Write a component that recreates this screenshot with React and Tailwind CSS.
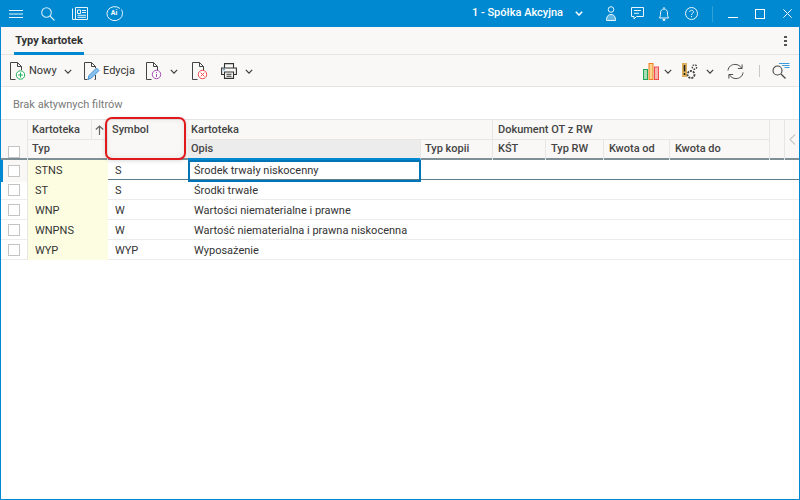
import React from "react";

const cols = "grid-cols-[27px_80px_80px_233px_72px_53px_58px_66px_100px_1fr]";

const Chevron = ({ className = "" }) => (
  <svg width="8" height="5" viewBox="0 0 10 6" className={className} fill="none" stroke="#3c3c3c" strokeWidth="1.500">
    <path d="M1 1 5 5 9 1" />
  </svg>
);

const Doc = ({ children }) => (
  <svg width="16" height="18" viewBox="0 0 16 18" fill="none" className="block">
    <path d="M.5 17.500V.5H7.500L11.500 4.500V8M7.500 .5V4.500H11.500M.5 17.500H5.500" stroke="#444" strokeWidth="1" />
    {children}
  </svg>
);

const Check = () => <div className="w-[12px] h-[12px] border border-[#c4c4c4] bg-white" />;

const rows = [
  ["STNS", "S", "Środek trwały niskocenny"],
  ["ST", "S", "Środki trwałe"],
  ["WNP", "W", "Wartości niematerialne i prawne"],
  ["WNPNS", "W", "Wartość niematerialna i prawna niskocenna"],
  ["WYP", "WYP", "Wyposażenie"],
];

const Hcell = ({ children, className = "" }) => (
  <div className={"flex items-center pt-[1px] text-[11px] font-medium text-[#444] border-r border-[#e6e6e6] " + className}>{children}</div>
);

export default function App() {
  return (
    <div className="w-[800px] h-[500px] overflow-hidden bg-white flex flex-col border-x border-b border-[#0089d0] text-[#333] font-['Roboto',sans-serif]">
      {/* title bar */}
      <div className="h-[27px] -mx-px shrink-0 bg-[#0089d0] flex items-center text-white">
        <svg width="14" height="8" viewBox="0 0 14 8" className="ml-[9px]" stroke="#e8f5fc" strokeWidth="1"><path d="M0 .5H14M0 4H14M0 7.500H14" /></svg>
        <svg width="14" height="14" viewBox="0 0 14 14" className="ml-[18px]" fill="none" stroke="#d5edf9" strokeWidth="1.100"><circle cx="5.500" cy="5.500" r="4.800" /><path d="M9 9l4.500 4.500" /></svg>
        <svg width="16" height="13" viewBox="0 0 16 13" className="ml-[17px]" fill="none" stroke="#e8f5fc" strokeWidth="1"><path d="M.5 1.500V12.500H15.500V.5H3.500V12.500" /><path d="M5.500 3H8.500V6.500H5.500ZM10 3.500H14M10 5.500H14M5.500 8.300H14M5.500 10.300H14" /></svg>
        <div className="ml-[17px] grid place-items-center">
          <svg width="18" height="16" viewBox="0 0 18 16" className="col-start-1 row-start-1" fill="none" stroke="#e8f5fc" strokeWidth="1"><path d="M15 2.500A7.800 7 0 1 0 17.500 7.500 7 7 0 0 0 16.500 3.500" /></svg>
          <span className="col-start-1 row-start-1 text-[7px] font-bold leading-none">Ai</span>
        </div>
        <div className="ml-auto flex items-center">
          <span className="text-[11px] font-medium">1 - Spółka Akcyjna</span>
          <svg width="8" height="5" viewBox="0 0 8 5" className="ml-[12px]" fill="none" stroke="#fff" strokeWidth="1.500"><path d="M.8.800 4 4 7.200.800" /></svg>
          <svg width="10" height="15" viewBox="0 0 10 15" className="ml-[23px]" fill="none" stroke="#e8f5fc" strokeWidth="1"><circle cx="5" cy="3.500" r="2.800" /><path d="M.5 14.500C.5 10.500 2 8.500 5 8.500S9.500 10.500 9.500 14.500Z" fill="#5fb6e4" /></svg>
          <svg width="13" height="13" viewBox="0 0 13 13" className="ml-[15px]" fill="none" stroke="#e8f5fc" strokeWidth="1"><path d="M.5.500H12.500V9.500H5.500L3 12V9.500H.5Z" /><path d="M3 3.500H10M3 6.300H8" /></svg>
          <svg width="10" height="14" viewBox="0 0 10 14" className="ml-[15px]" fill="none" stroke="#e8f5fc" strokeWidth="1"><path d="M.5 11H9.500C8.700 9.500 8.500 8.500 8.500 6 8.500 3.500 7 2 5 2S1.500 3.500 1.500 6C1.500 8.500 1.300 9.500.5 11Z" /><path d="M5 0V2" /><circle cx="5" cy="12.800" r=".9" fill="#fff" /></svg>
          <svg width="13" height="13" viewBox="0 0 13 13" className="ml-[16px]" fill="none" stroke="#e8f5fc" strokeWidth="1"><circle cx="6.500" cy="6.500" r="6" /><path d="M4.700 5C4.700 2.700 8.500 2.700 8.500 4.900 8.500 6.300 6.500 6.300 6.500 8" /><path d="M6.500 9V10.200" /></svg>
          <div className="ml-[14px] w-px h-[16px] bg-[#2ea0da]" />
          <div className="ml-[15px] w-[10px] h-px bg-white mt-[8px]" />
          <div className="ml-[17px] w-[10px] h-[10px] border border-white" />
          <svg width="9" height="9" viewBox="0 0 9 9" className="ml-[18px] mr-[8px]" stroke="#e8f5fc" strokeWidth="1"><path d="M.3.300l8.400 8.400M8.700.300l-8.400 8.400" /></svg>
        </div>
      </div>

      {/* tabs */}
      <div className="h-[28px] shrink-0 bg-[#f9f8f6] border-b border-[#e4e4e4] flex items-stretch">
        <div className="ml-[13px] w-[70px] pt-[4px] border-b-[3px] border-[#0089d0] -mb-px flex items-center justify-center text-[11px] font-bold text-[#333] whitespace-nowrap">Typy kartotek</div>
        <div className="ml-auto mr-[12px] flex flex-col justify-center gap-[2px]">
          <div className="w-[3px] h-[2px] bg-[#555]" />
          <div className="w-[3px] h-[2px] bg-[#555]" />
          <div className="w-[3px] h-[2px] bg-[#555]" />
        </div>
      </div>

      {/* toolbar */}
      <div className="h-[32px] pt-[1px] shrink-0 bg-[#f9f8f6] border-b border-[#e4e4e4] flex items-center text-[11px] text-[#333]">
        <div className="ml-[9px] w-[16px]">
          <Doc>
            <circle cx="10.500" cy="13" r="4.200" stroke="#22b35e" strokeWidth="1" fill="#fff" />
            <path d="M8 13H13M10.500 10.500V15.500" stroke="#22b35e" strokeWidth="1" />
          </Doc>
        </div>
        <span className="ml-[3px] w-[27px]">Nowy</span>
        <Chevron className="ml-[8px]" />
        <div className="ml-[12px] w-[16px]">
          <svg width="16" height="18" viewBox="0 0 16 18" fill="none" className="block">
            <path d="M.5 17.500V.5H7.500L11.500 4.500V6M7.500 .5V4.500H11.500M.5 17.500H3.500M10.500 17.500H11.500V13" stroke="#444" />
            <path d="M4 17.500L5 13.500 12.500 6 15 8.500 7.500 16 4 17.500Z" fill="#8cc0ea" stroke="#3f93d8" />
          </svg>
        </div>
        <span className="ml-[3px] w-[32px]">Edycja</span>
        <div className="ml-[11px] w-[16px]">
          <Doc>
            <circle cx="10.500" cy="12.500" r="4.200" stroke="#a84fb5" fill="#fff" />
            <path d="M10.500 10V11M10.500 12V15" stroke="#a84fb5" />
          </Doc>
        </div>
        <Chevron className="ml-[8px]" />
        <div className="ml-[14px] w-[16px]">
          <Doc>
            <circle cx="10.500" cy="12.500" r="4.200" stroke="#ee4c4c" fill="#fff" />
            <path d="M8.700 10.700L12.300 14.300M12.300 10.700L8.700 14.300" stroke="#ee4c4c" />
          </Doc>
        </div>
        <div className="ml-[13px] w-[16px]">
          <svg width="16" height="16" viewBox="0 0 16 16" fill="none" stroke="#333" strokeWidth="1.100" className="block">
            <path d="M3.500 5V.6H12.500V5" />
            <path d="M3 11.500H.6V5H15.400V11.500H13" />
            <path d="M3.500 9H12.500V15.400H3.500Z" />
            <path d="M5.500 11.200H10.500M5.500 13.200H10.500" />
            <path d="M2 6.800H4" stroke="#2b8fd6" />
          </svg>
        </div>
        <Chevron className="ml-[8px]" />

        <div className="ml-auto flex items-center">
          <svg width="16" height="17" viewBox="0 0 16 17" fill="none">
            <rect x=".5" y="6.500" width="4" height="10" fill="#a9dcb9" stroke="#1fa855" />
            <rect x="6" y=".5" width="4" height="16" fill="#fad58e" stroke="#ee7d20" />
            <rect x="11.500" y="4" width="4" height="12.500" fill="#f7b5b0" stroke="#ee4c4c" />
          </svg>
          <Chevron className="ml-[5px]" />
          <svg width="16" height="17" viewBox="0 0 16 17" fill="none" className="ml-[10px]">
            <rect x="0" y="0" width="5" height="14" fill="#dfb05a" />
            <path d="M2.500 2V8.500M2.500 10V12" stroke="#222" strokeWidth="1.600" />
            <circle cx="12.500" cy="4" r="2.200" stroke="#444" strokeWidth="1.400" strokeDasharray="1.500 1" />
            <circle cx="9" cy="11.500" r="3.500" stroke="#444" strokeWidth="1.800" strokeDasharray="2 1" />
          </svg>
          <Chevron className="ml-[8px]" />
          <svg width="17" height="17" viewBox="0 0 18 18" fill="none" stroke="#444" strokeWidth="1" className="ml-[13px]">
            <path d="M1 8C1.500 4 4.500 1.500 8.500 1.500 11.500 1.500 14 3 15.500 5.500" />
            <path d="M16 1.500V5.800H11.500" />
            <path d="M17 10C16.500 14 13.500 16.500 9.500 16.500 6.500 16.500 4 15 2.500 12.500" />
            <path d="M2 16.500V12.200H6.500" />
          </svg>
          <div className="ml-[15px] w-px h-[12px] bg-[#c8c8c8]" />
          <svg width="18" height="18" viewBox="0 0 18 18" fill="none" className="ml-[12px] mr-[9px]">
            <circle cx="5.500" cy="8.500" r="4.500" stroke="#444" strokeWidth="1.100" />
            <path d="M9 12L13.500 16.500" stroke="#444" strokeWidth="1.300" />
            <path d="M7 1.500H17.500M10 3.500H17.500M12.500 5.500H17.500" stroke="#3d9bdb" />
          </svg>
        </div>
      </div>

      {/* filters */}
      <div className="h-[32px] pt-[4px] shrink-0 bg-white flex items-center pl-[12px] text-[11px] text-[#7a7a7a]">Brak aktywnych filtrów</div>

      {/* table */}
      <div className="relative flex-1">
        <div className="flex border-t border-b-2 border-t-[#e4e4e4] border-b-[#7f8f98] bg-[#f9f8f6] h-[41px] box-border">
          <div className="flex-1 min-w-0">
            <div className="grid h-[20px] grid-cols-[27px_80px_80px_305px_277px_1fr]">
              <div className="border-r border-[#e6e6e6]" />
              <div className="flex border-r border-[#e6e6e6] border-b">
                <Hcell className="w-[64px] pl-[4px]">Kartoteka</Hcell>
                <div className="flex-1 flex items-center justify-center">
                  <svg width="9" height="10" viewBox="0 0 9 10" fill="none" stroke="#666" strokeWidth="1.200"><path d="M4.500 10V1M.8 4.500 4.500 1 8.200 4.500" /></svg>
                </div>
              </div>
              <Hcell className="border-r-0 pl-[4px]">Symbol</Hcell>
              <Hcell className="border-b pl-[3px]">Kartoteka</Hcell>
              <Hcell className="border-b pl-[5px]">Dokument OT z RW</Hcell>
              <div className="border-r border-[#e6e6e6]" />
            </div>
            <div className={"grid h-[19px] " + cols}>
              <div className="pl-[7px] pt-[6px] border-r border-[#e6e6e6]"><Check /></div>
              <Hcell className="pl-[4px] pb-[2px]">Typ</Hcell>
              <Hcell className="border-r-0" />
              <Hcell className="pl-[3px] bg-[#ececec] border-b-2 border-b-[#0089d0]">Opis</Hcell>
              <Hcell className="pl-[4px] pb-[2px]">Typ kopii</Hcell>
              <Hcell className="pl-[5px] pb-[2px]">KŚT</Hcell>
              <Hcell className="pl-[5px] pb-[2px]">Typ RW</Hcell>
              <Hcell className="pl-[5px] pb-[2px]">Kwota od</Hcell>
              <Hcell className="pl-[5px] pb-[2px]">Kwota do</Hcell>
              <div className="border-r border-[#e6e6e6]" />
            </div>
          </div>
          <div className="w-[14px] flex items-center justify-center shrink-0">
            <svg width="7" height="11" viewBox="0 0 7 11" fill="none" stroke="#c9c9c9" strokeWidth="1.200"><path d="M6 .5 1 5.500 6 10.500" /></svg>
          </div>
        </div>
        {rows.map((r, i) => {
          const pad = i === 0 ? " pt-[1px]" : " pt-[3px]";
          return (
            <div
              key={r[0]}
              className={
                "grid h-[20px] text-[11px] text-[#333] " +
                cols +
                (i === 0 ? " border-b border-[#5d7c8d]" : " border-b border-[#ececec]")
              }
            >
              <div className={"flex items-center border-r border-[#e6e6e6]" + (i === 0 ? " -ml-px pl-[5px] border-l-[3px] border-l-[#0089d0] bg-[#f9f8f6]" : " pl-[7px]")}>
                <Check />
              </div>
              <div className={"bg-[#fdfde2] pl-[7px] flex items-center" + pad}>{r[0]}</div>
              <div className={"pl-[7px] flex items-center" + pad}>{r[1]}</div>
              <div className={"flex items-center whitespace-nowrap" + (i === 0 ? " border-2 border-[#0075b5] pl-[4px] pt-[1px]" : " pl-[6px] pt-[3px]")}>{r[2]}</div>
            </div>
          );
        })}

        {/* red highlight annotation */}
        <div className="absolute left-[104px] top-[-2px] w-[81px] h-[43px] rounded-[7px] border-2 border-[#e2191c] shadow-[inset_0_0_6px_rgba(0,0,0,0.08),0_1px_4px_rgba(0,0,0,0.15)] pointer-events-none" />
      </div>
    </div>
  );
}
